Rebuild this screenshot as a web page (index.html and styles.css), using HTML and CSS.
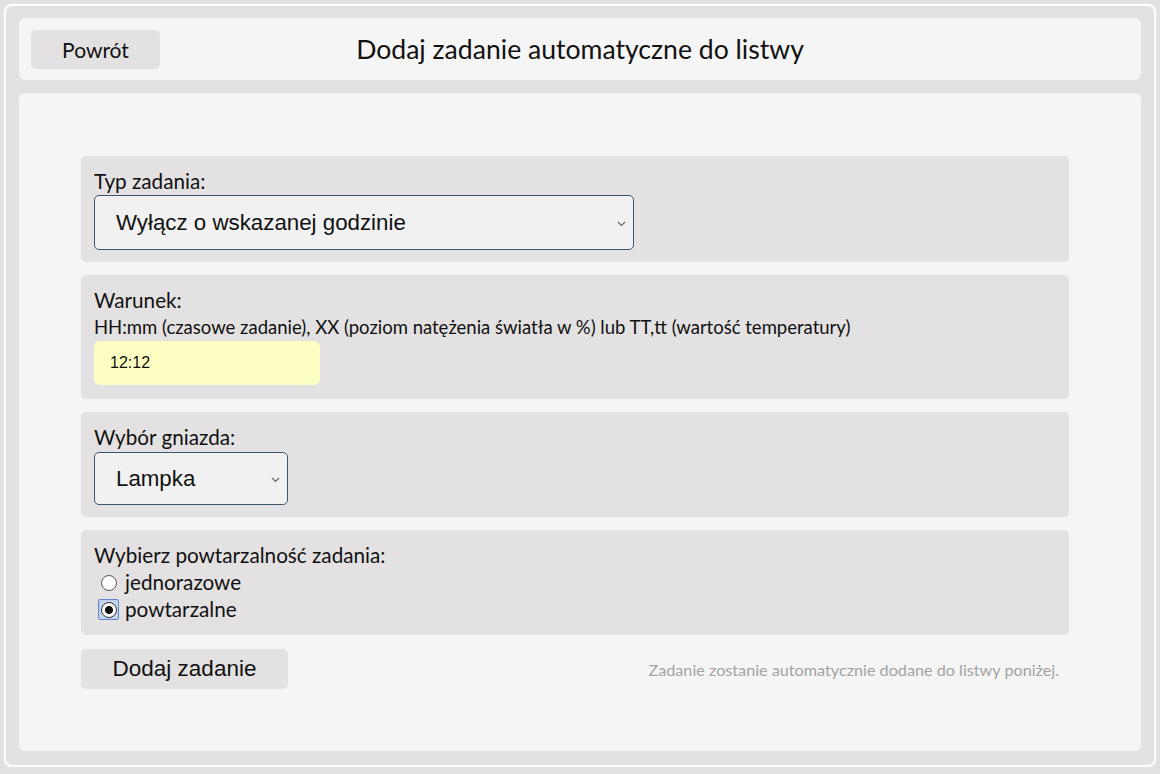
FILE: index.html
```html
<!DOCTYPE html>
<html lang="pl">
<head>
<meta charset="utf-8">
<title>Dodaj zadanie automatyczne do listwy</title>
<link rel="stylesheet" href="styles.css">
</head>
<body>
<div class="frame">
  <header class="topbar">
    <div class="topbar-left"><button class="back-btn" type="button">Powrót</button></div>
    <h1 class="title">Dodaj zadanie automatyczne do listwy</h1>
    <div class="topbar-right"></div>
  </header>
  <main class="panel">
    <form class="form">
      <section class="field field-type">
        <label class="field-label" for="typ">Typ zadania:</label>
        <div class="select-box select-wide">
          <select id="typ" class="select">
            <option>Wyłącz o wskazanej godzinie</option>
          </select>
          <svg class="chevron" width="9" height="6" viewBox="0 0 9 6"><path d="M1 1 L4.5 4.5 L8 1" fill="none" stroke="#6a6a6a" stroke-width="1.2"/></svg>
        </div>
      </section>
      <section class="field field-cond">
        <label class="field-label" for="warunek">Warunek:</label>
        <div class="field-hint">HH:mm (czasowe zadanie), XX (poziom natężenia światła w %) lub TT,tt (wartość temperatury)</div>
        <input id="warunek" class="text-input" type="text" value="12:12">
      </section>
      <section class="field field-socket">
        <label class="field-label" for="gniazdo">Wybór gniazda:</label>
        <div class="select-box select-narrow">
          <select id="gniazdo" class="select">
            <option>Lampka</option>
          </select>
          <svg class="chevron" width="9" height="6" viewBox="0 0 9 6"><path d="M1 1 L4.5 4.5 L8 1" fill="none" stroke="#6a6a6a" stroke-width="1.2"/></svg>
        </div>
      </section>
      <section class="field">
        <div class="field-label">Wybierz powtarzalność zadania:</div>
        <label class="radio-row"><span class="radio-wrap"><input class="radio" type="radio" name="powt"></span><span>jednorazowe</span></label>
        <label class="radio-row"><span class="radio-wrap focused"><input class="radio" type="radio" name="powt" checked></span><span>powtarzalne</span></label>
      </section>
      <div class="actions">
        <button class="submit-btn" type="button">Dodaj zadanie</button>
        <p class="note">Zadanie zostanie automatycznie dodane do listwy poniżej.</p>
      </div>
    </form>
  </main>
</div>
</body>
</html>
```
FILE: styles.css
```css
html, body {
  margin: 0;
  padding: 0;
}
body {
  background: #e3e1e2;
  font-family: Lato, "Open Sans", sans-serif;
  color: #111;
  height: 774px;
  overflow: hidden;
}
.frame {
  margin: 4px;
  width: 1152px;
  height: 763px;
  border: 2px solid #ffffff;
  border-radius: 8px;
  padding: 12px 13px 13px 13px;
  box-sizing: border-box;
  display: flex;
  flex-direction: column;
  gap: 13px;
}
.topbar {
  height: 62px;
  background: #f5f5f5;
  border-radius: 6px;
  display: grid;
  grid-template-columns: 1fr auto 1fr;
  align-items: center;
  padding: 0 12px;
  box-sizing: border-box;
  flex: none;
}
.back-btn {
  width: 129px;
  height: 39px;
  border: none;
  border-radius: 5px;
  background: #e3e1e2;
  font-family: Lato, sans-serif;
  font-size: 21px;
  color: #111;
  padding: 0;
}
.title {
  margin: 0;
  font-weight: 400;
  font-size: 26.6px;
  color: #111;
}
.panel {
  height: 658px;
  background: #f5f5f5;
  border-radius: 6px;
  padding: 63px 72px 0 62px;
  box-sizing: border-box;
  flex: none;
}
.form {
  display: flex;
  flex-direction: column;
  gap: 13px;
}
.field {
  background: #e3e1e2;
  border-radius: 5px;
  padding: 12px 13px;
  display: flex;
  flex-direction: column;
  align-items: flex-start;
}
.field-cond {
  padding-bottom: 14px;
}
.field-socket .field-label {
  margin-bottom: 1px;
}
.field-label {
  font-size: 20.7px;
  line-height: 27px;
}
.field-hint {
  font-size: 18.5px;
  line-height: 27px;
}
.select-box {
  position: relative;
}
.select-wide {
  width: 540px;
  height: 55px;
}
.select-narrow {
  width: 194px;
  height: 53px;
}
.select {
  appearance: none;
  -webkit-appearance: none;
  width: 100%;
  height: 100%;
  font-family: "Liberation Sans", Arial, sans-serif;
  font-size: 22.3px;
  color: #111;
  background-color: #f1f1f1;
  border: 1px solid #3c5670;
  border-radius: 5px;
  padding: 0 30px 0 21px;
  box-sizing: border-box;
  outline: none;
}
.chevron {
  position: absolute;
  right: 8px;
  top: 50%;
  margin-top: -2px;
  pointer-events: none;
}
.text-input {
  width: 226px;
  height: 44px;
  box-sizing: border-box;
  border: none;
  border-radius: 6px;
  background: #fdffc2;
  font-family: "Liberation Sans", Arial, sans-serif;
  font-size: 16px;
  color: #111;
  padding: 0 16px;
  outline: none;
}
.radio-row {
  display: flex;
  align-items: center;
  font-size: 20.7px;
  line-height: 27px;
  height: 27px;
}
.radio-wrap {
  width: 21px;
  height: 21px;
  box-sizing: border-box;
  display: flex;
  align-items: center;
  justify-content: center;
  margin: 0 6px 0 4px;
  border: 1px solid transparent;
  border-radius: 2px;
}
.radio-wrap.focused {
  background: #c2d3ee;
  border-color: #5f86cc;
}
.radio {
  appearance: none;
  -webkit-appearance: none;
  margin: 0;
  width: 16px;
  height: 16px;
  border: 1px solid #5a5a5a;
  border-radius: 50%;
  background: #ffffff;
  box-sizing: border-box;
}
.radio:checked {
  background: radial-gradient(circle, #111 0 3.6px, #ffffff 4.4px);
  border-color: #333;
}
.actions {
  display: flex;
  align-items: center;
  justify-content: space-between;
  padding-right: 10px;
  margin-top: 1px;
}
.submit-btn {
  width: 207px;
  height: 40px;
  border: none;
  border-radius: 5px;
  background: #e3e1e2;
  font-family: "Liberation Sans", Arial, sans-serif;
  font-size: 22.5px;
  color: #111;
  padding: 0;
}
.note {
  margin: 0;
  font-size: 16.2px;
  color: #a3a3a3;
}
```
